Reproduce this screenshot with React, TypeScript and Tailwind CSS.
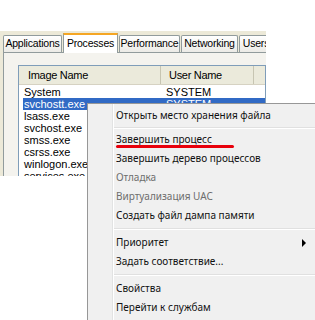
import React from "react";

const xpFont = { fontFamily: '"Liberation Sans", Arial, sans-serif' };
const menuFont = { fontFamily: '"Noto Sans", "Open Sans", sans-serif' };

const tabs = [
  { label: "Applications", w: "w-[59px]" },
  { label: "Processes", w: "w-[55px]", active: true },
  { label: "Performance", w: "w-[61px]" },
  { label: "Networking", w: "w-[57px]" },
  { label: "Users", w: "w-[34px]" },
];

const rows = [
  { name: "System", user: "SYSTEM" },
  { name: "svchostt.exe", user: "SYSTEM", selected: true },
  { name: "lsass.exe", user: "SYSTEM" },
  { name: "svchost.exe", user: "SYSTEM" },
  { name: "smss.exe", user: "SYSTEM" },
  { name: "csrss.exe", user: "SYSTEM" },
  { name: "winlogon.exe", user: "SYSTEM" },
  { name: "services.exe", user: "SYSTEM" },
];

type MenuEntry =
  | { sep: true; h: string }
  | { label: string; disabled?: boolean; arrow?: boolean; sep?: false };

const menu: MenuEntry[] = [
  { label: "Открыть место хранения файла" },
  { sep: true, h: "h-[5px]" },
  { label: "Завершить процесс" },
  { label: "Завершить дерево процессов" },
  { label: "Отладка", disabled: true },
  { label: "Виртуализация UAC", disabled: true },
  { label: "Создать файл дампа памяти" },
  { sep: true, h: "h-[8px]" },
  { label: "Приоритет", arrow: true },
  { label: "Задать соответствие..." },
  { sep: true, h: "h-[8px]" },
  { label: "Свойства" },
  { label: "Перейти к службам" },
];

export default function App() {
  return (
    <div className="relative w-[315px] h-[320px] overflow-hidden bg-white">
      <div className="h-[31px]" />

      {/* Task manager window, cropped */}
      <div className="w-[266px] h-[145px] overflow-hidden bg-[#ece9d8]" style={xpFont}>
        <div className="flex items-end h-[21px] pl-[3px] gap-[1px]">
          {tabs.map((t) =>
            t.active ? (
              <div
                key={t.label}
                className={`${t.w} h-[20px] shrink-0 -mb-[1px] relative z-10 bg-white border-x border-[#919b9c] border-t-2 border-t-[#f5a623] flex items-center justify-center text-[10.5px] tracking-[-0.2px] text-black`}
              >
                {t.label}
              </div>
            ) : (
              <div
                key={t.label}
                className={`${t.w} h-[17px] shrink-0 bg-gradient-to-b from-white to-[#ecebe6] border border-b-0 border-[#919b9c] rounded-t-[2px] flex items-center justify-center text-[10.5px] tracking-[-0.2px] text-black overflow-hidden whitespace-nowrap`}
              >
                {t.label}
              </div>
            )
          )}
        </div>

        <div className="ml-[3px] h-full border-l border-t border-[#919b9c] bg-[#f4f3ee] pl-[14px] pt-[12px]">
          <div className="bg-white border border-[#7f9db9] h-[200px]">
            <div className="flex h-[19px] bg-[#ebeadb] border-b border-[#d6d2c2] text-[11px] tracking-[-0.3px] text-black">
              <div className="w-[142px] pl-[9px] flex items-center border-r border-[#c7c5b2]">Image Name</div>
              <div className="w-[93px] pl-[8px] flex items-center border-r border-[#c7c5b2]">User Name</div>
            </div>
            <div className="pt-[1px]">
              {rows.map((r) => (
                <div
                  key={r.name}
                  className={`flex h-[12px] items-center text-[11px] leading-none ml-[4px] ${
                    r.selected ? "bg-[#316ac5] text-white" : "text-black"
                  }`}
                >
                  <div className="w-[142px] pl-[1px]">{r.name}</div>
                  <div className="pl-[1px]">{r.user}</div>
                </div>
              ))}
            </div>
          </div>
        </div>
      </div>

      {/* Context menu */}
      <div
        className="absolute left-[87px] top-[103px] w-[240px] h-[230px] bg-[#f0f0f0] border-l border-t border-[#979797] text-[10px]"
        style={menuFont}
      >
        <div className="absolute left-[24px] top-0 bottom-0 w-[2px] border-l border-[#e2e3e3] bg-white" />
        <div className="relative pt-[2px]">
          {menu.map((m, i) =>
            m.sep ? (
              <div key={i} className={`${m.h} flex items-center pl-[26px]`}>
                <div className="w-full h-[2px] border-t border-[#e0e0e0] bg-white" />
              </div>
            ) : (
              <div
                key={i}
                className={`relative h-[19px] flex items-center pl-[28px] whitespace-nowrap ${
                  m.disabled ? "text-[#6d6d6d]" : "text-[#111]"
                }`}
              >
                {m.label}
                {m.arrow && (
                  <div className="absolute left-[214px] top-[6px] w-0 h-0 border-y-[4px] border-y-transparent border-l-[4px] border-l-black" />
                )}
              </div>
            )
          )}
        </div>
      </div>

      {/* red underline annotation */}
      <div className="absolute left-[116px] top-[145px] w-[118px] h-[3px] rounded-full bg-[#e8000b]" />
    </div>
  );
}
